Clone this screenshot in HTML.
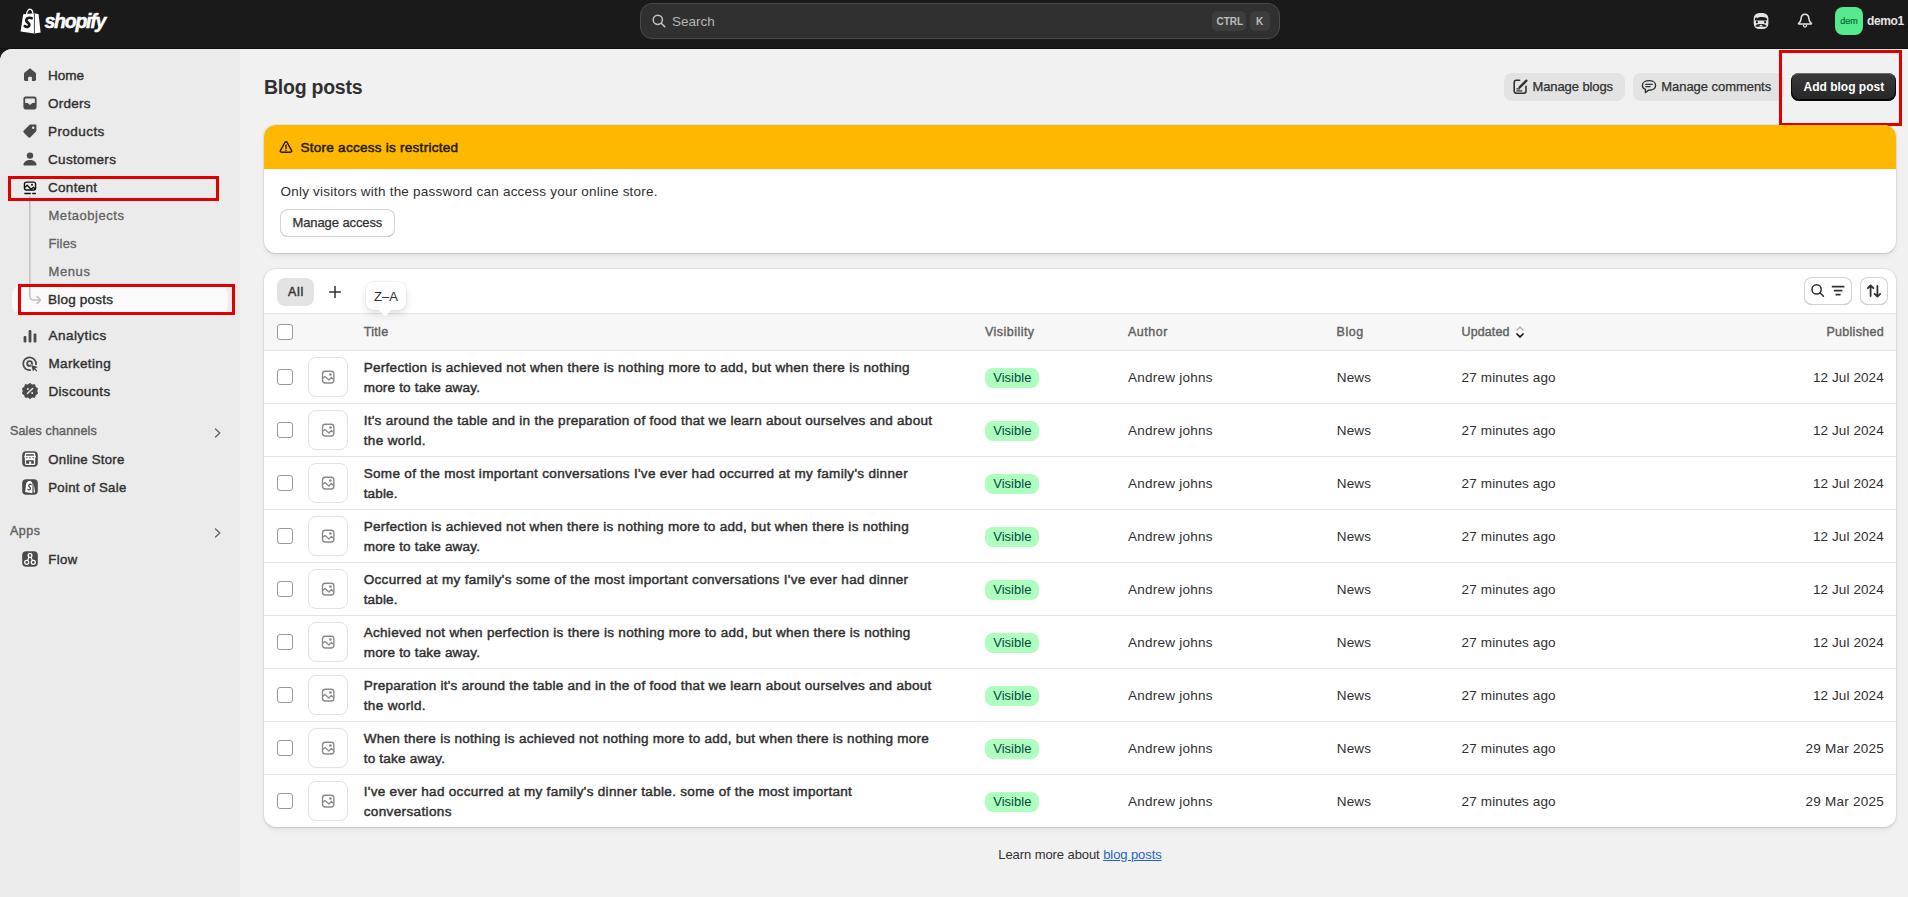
<!DOCTYPE html>
<html><head><meta charset="utf-8"><title>Blog posts</title>
<style>
html,body{margin:0;padding:0;}
body{width:1908px;height:897px;position:relative;overflow:hidden;background:#f1f1f1;font-family:"Liberation Sans", sans-serif;-webkit-font-smoothing:antialiased;}
</style></head><body>
<div style="position:absolute;left:0px;top:0px;width:1908px;height:49px;background:#1a1a1a;border-bottom:1px solid #0e1111;box-sizing:border-box;"></div>
<svg style="position:absolute;left:20px;top:8px;" width="22" height="26" viewBox="0 0 22 26">
<path d="M3.2 6.2 L14.8 5.2 L18.6 6.2 L20.6 24.4 L14.4 25.6 L0.6 23.4 Z" fill="#fff"/>
<path d="M14.4 5.4 L14.4 25.4" stroke="#1a1a1a" stroke-width="0.8"/>
<path d="M6.6 6.4 C6.8 2.2 9.2 0.8 10.8 1.4 C12.4 2 12.8 3.6 12.8 5.6" fill="none" stroke="#fff" stroke-width="1.3"/>
<path d="M11.6 10.2 C10.6 9.6 7.4 9.2 6.4 11.6 C5.4 14.4 9.6 14.6 9.4 17 C9.2 19.2 6.6 19.4 4.8 18.2" fill="none" stroke="#1a1a1a" stroke-width="2.7" stroke-linecap="round"/>
</svg>
<div style="position:absolute;left:44.5px;top:12.09px;font-size:19.5px;line-height:19.5px;font-weight:700;color:#ffffff;white-space:nowrap;letter-spacing:-1.25px;font-style:italic;-webkit-text-stroke:0.5px #fff;">shopify</div>
<div style="position:absolute;left:640px;top:3px;width:638px;height:34px;background:#303030;border:1px solid #4a4a4a;border-radius:12px;"></div>
<svg style="position:absolute;left:652px;top:14px;" width="14" height="14" viewBox="0 0 14 14"><circle cx="5.8" cy="5.8" r="4.6" fill="none" stroke="#c4c4c4" stroke-width="1.5"/><path d="M9.2 9.2 L12.8 12.8" stroke="#c4c4c4" stroke-width="1.6" stroke-linecap="round"/></svg>
<div style="position:absolute;left:672px;top:14.57px;font-size:13.5px;line-height:13.5px;font-weight:400;color:#b5b5b5;white-space:nowrap;">Search</div>
<div style="position:absolute;left:1212px;top:11px;width:34px;height:20px;background:#3d3d3d;border-radius:5px;"></div>
<div style="position:absolute;left:1216.5px;top:16.54px;font-size:10px;line-height:10px;font-weight:700;color:#bdbdbd;white-space:nowrap;">CTRL</div>
<div style="position:absolute;left:1250px;top:11px;width:20px;height:20px;background:#3d3d3d;border-radius:5px;"></div>
<div style="position:absolute;left:1256px;top:16.54px;font-size:10px;line-height:10px;font-weight:700;color:#bdbdbd;white-space:nowrap;">K</div>
<svg style="position:absolute;left:1752px;top:12px;" width="18" height="18" viewBox="0 0 18 18">
<rect x="1.7" y="0.9" width="14.7" height="16.2" rx="5.6" fill="#e3e3e3"/>
<path d="M2.8 8.2 C2.8 6.4 3.6 5.2 4.6 5.2 L5 6.6 C6 5.4 7.8 5 10 5 C13 5 15 5.8 15.2 7.6 L15.2 8.2 C13.4 8.4 11.8 8.8 10.4 8.6 C8.6 8.2 5.6 8.8 2.8 8.2 Z" fill="#1a1a1a"/>
<circle cx="4.9" cy="10.2" r="1.1" fill="#1a1a1a"/><circle cx="13.1" cy="10.2" r="1.1" fill="#1a1a1a"/>
<path d="M3.2 14.2 C4.6 12.6 6.4 11.8 9 12.2 C11.6 11.8 13.4 12.6 14.8 14.2 C13.6 14.8 12 14.8 10.6 14.4 L7.4 14.4 C6 14.8 4.4 14.8 3.2 14.2 Z" fill="#1a1a1a"/>
<ellipse cx="9" cy="13.5" rx="1.6" ry="0.7" fill="#e3e3e3"/>
</svg>
<svg style="position:absolute;left:1796px;top:13px;" width="18" height="18" viewBox="0 0 18 18">
<path d="M9 1.2 C6.4 1.2 5.3 3.2 5.1 5.6 C4.9 8 4.4 8.9 2.8 10 C2.2 10.4 2.4 11 3 11 L15 11 C15.6 11 15.8 10.4 15.2 10 C13.6 8.9 13.1 8 12.9 5.6 C12.7 3.2 11.6 1.2 9 1.2 Z" fill="none" stroke="#e3e3e3" stroke-width="1.5" stroke-linejoin="round"/>
<path d="M7.5 11.6 L7.5 12.6 A1.5 1.5 0 0 0 10.5 12.6 L10.5 11.6" fill="none" stroke="#e3e3e3" stroke-width="1.3"/>
</svg>
<div style="position:absolute;left:1835px;top:7px;width:28px;height:28px;background:#56ea8f;border-radius:8px;"></div>
<div style="position:absolute;left:1840.2px;top:16.98px;font-size:9px;line-height:9px;font-weight:400;color:#086a36;white-space:nowrap;-webkit-text-stroke:0.2px #086a36;">dem</div>
<div style="position:absolute;left:1867px;top:15.44px;font-size:12px;line-height:12px;font-weight:700;color:#e3e3e3;white-space:nowrap;letter-spacing:-0.35px;">demo1</div>
<div style="position:absolute;left:0px;top:49px;width:40px;height:40px;background:#1a1a1a;"></div>
<div style="position:absolute;left:0px;top:49px;width:1908px;height:848px;background:#f1f1f1;border-top-left-radius:12px;overflow:hidden;"></div>
<div style="position:absolute;left:0px;top:49px;width:240px;height:848px;background:#ebebeb;border-top-left-radius:12px;"></div>
<svg style="position:absolute;left:23px;top:67.8px;" width="14" height="14" viewBox="0 0 14 14"><path d="M7 0.3 L12.3 4.5 C12.8 4.9 13 5.3 13 5.9 L13 11.6 C13 12.4 12.4 13 11.6 13 L8.9 13 L8.9 10 C8.9 9.2 8.3 8.7 7.6 8.7 L6.4 8.7 C5.7 8.7 5.1 9.2 5.1 10 L5.1 13 L2.4 13 C1.6 13 1 12.4 1 11.6 L1 5.9 C1 5.3 1.2 4.9 1.7 4.5 Z" fill="#4a4a4a"/></svg>
<div style="position:absolute;left:48px;top:69.26px;font-size:13.52px;line-height:13.52px;font-weight:400;color:#303030;white-space:nowrap;letter-spacing:0.018px;-webkit-text-stroke:0.4px #303030;">Home</div>
<svg style="position:absolute;left:23px;top:96px;" width="14" height="14" viewBox="0 0 14 14"><path d="M2.6 0.6 L11.4 0.6 C12.6 0.6 13.6 1.6 13.6 2.8 L13.6 11.2 C13.6 12.4 12.6 13.4 11.4 13.4 L2.6 13.4 C1.4 13.4 0.4 12.4 0.4 11.2 L0.4 2.8 C0.4 1.6 1.4 0.6 2.6 0.6 Z M2.2 7 L4.8 7 L7 9 L9.2 7 L11.8 7 L11.8 3 C11.8 2.6 11.5 2.4 11.2 2.4 L2.8 2.4 C2.5 2.4 2.2 2.6 2.2 3 Z" fill="#4a4a4a" fill-rule="evenodd"/></svg>
<div style="position:absolute;left:48px;top:97.06px;font-size:13.52px;line-height:13.52px;font-weight:400;color:#303030;white-space:nowrap;letter-spacing:0.262px;-webkit-text-stroke:0.4px #303030;">Orders</div>
<svg style="position:absolute;left:23px;top:124px;" width="14" height="14" viewBox="0 0 14 14"><path d="M7.4 0.6 L12.4 0.6 C13 0.6 13.4 1 13.4 1.6 L13.4 6.6 C13.4 7 13.2 7.3 13 7.6 L7.4 13.2 C6.8 13.8 5.9 13.8 5.3 13.2 L0.8 8.7 C0.2 8.1 0.2 7.2 0.8 6.6 L6.4 1 C6.7 0.8 7 0.6 7.4 0.6 Z" fill="#4a4a4a"/><circle cx="10.2" cy="3.8" r="1.2" fill="#ebebeb"/></svg>
<div style="position:absolute;left:48px;top:124.86px;font-size:13.52px;line-height:13.52px;font-weight:400;color:#303030;white-space:nowrap;letter-spacing:0.427px;-webkit-text-stroke:0.4px #303030;">Products</div>
<svg style="position:absolute;left:23px;top:152.2px;" width="14" height="14" viewBox="0 0 14 14"><circle cx="7" cy="3.6" r="3.2" fill="#4a4a4a"/><path d="M1 13.4 C0.6 13.4 0.4 13 0.4 12.6 C0.8 9.8 3.6 8 7 8 C10.4 8 13.2 9.8 13.6 12.6 C13.6 13 13.4 13.4 13 13.4 Z" fill="#4a4a4a"/></svg>
<div style="position:absolute;left:48px;top:152.56px;font-size:13.52px;line-height:13.52px;font-weight:400;color:#303030;white-space:nowrap;letter-spacing:0.318px;-webkit-text-stroke:0.4px #303030;">Customers</div>
<svg style="position:absolute;left:23px;top:180.7px;" width="14" height="14" viewBox="0 0 14 14"><rect x="1.45" y="1.05" width="11.1" height="7.9" rx="2" fill="none" stroke="#111" stroke-width="1.35"/><path d="M1.6 6.6 L4.3 4.3 L8 8.3 L10.4 6.3 L12.4 8.1" fill="none" stroke="#111" stroke-width="1.3" stroke-linejoin="round"/><circle cx="9" cy="3.7" r="1" fill="#111"/><path d="M1.9 12.4 L7.2 12.4 M9.8 12.4 L12.3 12.4" stroke="#111" stroke-width="1.5" stroke-linecap="round"/></svg>
<div style="position:absolute;left:48px;top:180.56px;font-size:13.52px;line-height:13.52px;font-weight:400;color:#303030;white-space:nowrap;letter-spacing:0.291px;-webkit-text-stroke:0.4px #303030;">Content</div>
<div style="position:absolute;left:48.5px;top:208.80px;font-size:13px;line-height:13px;font-weight:400;color:#616161;white-space:nowrap;letter-spacing:0.541px;-webkit-text-stroke:0.3px #616161;">Metaobjects</div>
<div style="position:absolute;left:48.5px;top:236.80px;font-size:13px;line-height:13px;font-weight:400;color:#616161;white-space:nowrap;letter-spacing:0.138px;-webkit-text-stroke:0.3px #616161;">Files</div>
<div style="position:absolute;left:48.5px;top:264.80px;font-size:13px;line-height:13px;font-weight:400;color:#616161;white-space:nowrap;letter-spacing:0.595px;-webkit-text-stroke:0.3px #616161;">Menus</div>
<div style="position:absolute;left:12px;top:286px;width:216px;height:28px;background:#fafafa;border-radius:8px;"></div>
<svg style="position:absolute;left:28px;top:196px;" width="16" height="110" viewBox="0 0 16 110"><path d="M1.8 0 L1.8 100 C1.8 102.6 3.2 104 5.8 104 L12.2 104" fill="none" stroke="#c0c0c0" stroke-width="1.5"/><path d="M9.2 100.6 L12.6 104 L9.2 107.4" fill="none" stroke="#c0c0c0" stroke-width="1.5" stroke-linecap="round" stroke-linejoin="round"/></svg>
<div style="position:absolute;left:48px;top:292.86px;font-size:13.52px;line-height:13.52px;font-weight:400;color:#303030;white-space:nowrap;letter-spacing:0.208px;-webkit-text-stroke:0.4px #303030;">Blog posts</div>
<svg style="position:absolute;left:23px;top:328.6px;" width="14" height="14" viewBox="0 0 14 14"><rect x="0.6" y="7" width="2.8" height="6.4" rx="1" fill="#4a4a4a"/><rect x="5.6" y="1" width="2.8" height="12.4" rx="1" fill="#4a4a4a"/><rect x="10.6" y="4.4" width="2.8" height="9" rx="1" fill="#4a4a4a"/></svg>
<div style="position:absolute;left:48.5px;top:329.06px;font-size:13.52px;line-height:13.52px;font-weight:400;color:#303030;white-space:nowrap;letter-spacing:0.45px;-webkit-text-stroke:0.4px #303030;">Analytics</div>
<svg style="position:absolute;left:22.4px;top:355.6px;" width="16" height="16" viewBox="0 0 16 16"><path d="M14 8.3 A6.4 6.4 0 1 0 8.2 14.1" fill="none" stroke="#4a4a4a" stroke-width="1.7" stroke-linecap="round"/><circle cx="7.6" cy="7.5" r="2.4" fill="none" stroke="#4a4a4a" stroke-width="1.9"/><path d="M9.2 8.9 L15.8 11 L13.2 12.6 L15.4 14.8 L14.6 15.6 L12.4 13.4 L11 15.6 Z" fill="#4a4a4a" stroke="#ebebeb" stroke-width="1.1" stroke-linejoin="round" paint-order="stroke"/></svg>
<div style="position:absolute;left:48.5px;top:357.06px;font-size:13.52px;line-height:13.52px;font-weight:400;color:#303030;white-space:nowrap;letter-spacing:0.355px;-webkit-text-stroke:0.4px #303030;">Marketing</div>
<svg style="position:absolute;left:22px;top:383.2px;" width="16" height="16" viewBox="0 0 16 16"><path d="M8 0.3 L10.1 1.9 L12.7 1.6 L13.4 4.1 L15.7 5.5 L14.8 8 L15.7 10.5 L13.4 11.9 L12.7 14.4 L10.1 14.1 L8 15.7 L5.9 14.1 L3.3 14.4 L2.6 11.9 L0.3 10.5 L1.2 8 L0.3 5.5 L2.6 4.1 L3.3 1.6 L5.9 1.9 Z" fill="#4a4a4a" stroke="#4a4a4a" stroke-width="0.8" stroke-linejoin="round"/><path d="M5.4 10.6 L10.6 5.4" stroke="#ebebeb" stroke-width="1.4" stroke-linecap="round"/><circle cx="5.8" cy="6" r="1" fill="#ebebeb"/><circle cx="10.2" cy="10" r="1" fill="#ebebeb"/></svg>
<div style="position:absolute;left:48.5px;top:385.26px;font-size:13.52px;line-height:13.52px;font-weight:400;color:#303030;white-space:nowrap;letter-spacing:0.292px;-webkit-text-stroke:0.4px #303030;">Discounts</div>
<div style="position:absolute;left:10px;top:424.84px;font-size:12.48px;line-height:12.48px;font-weight:400;color:#616161;white-space:nowrap;letter-spacing:0.159px;-webkit-text-stroke:0.4px #616161;">Sales channels</div>
<svg style="position:absolute;left:214px;top:428px;" width="8" height="10" viewBox="0 0 8 10"><path d="M1.5 1 L5.8 5 L1.5 9" fill="none" stroke="#616161" stroke-width="1.3" stroke-linecap="round" stroke-linejoin="round"/></svg>
<svg style="position:absolute;left:22px;top:451px;" width="16" height="16" viewBox="0 0 16 16"><rect x="0.2" y="0.2" width="15.6" height="15.6" rx="4" fill="#4a4a4a"/><rect x="2.9" y="1.8" width="10.3" height="12.3" rx="1.3" fill="#fff"/><rect x="2.2" y="4.4" width="11.6" height="2.3" rx="1" fill="#fff"/><rect x="4" y="3.2" width="7.9" height="1.5" fill="#4a4a4a"/><path d="M3.7 6.3 L5.8 6.3 L4.75 7.8 Z M6.95 6.3 L9.05 6.3 L8 7.8 Z M10.2 6.3 L12.3 6.3 L11.25 7.8 Z" fill="#4a4a4a"/><rect x="4.2" y="9.2" width="7.6" height="3.6" fill="#4a4a4a"/><rect x="7.1" y="10.5" width="2.1" height="2.4" fill="#fff"/></svg>
<div style="position:absolute;left:48.3px;top:453.13px;font-size:13.2px;line-height:13.2px;font-weight:400;color:#303030;white-space:nowrap;letter-spacing:0.248px;-webkit-text-stroke:0.4px #303030;">Online Store</div>
<svg style="position:absolute;left:22px;top:479px;" width="16" height="16" viewBox="0 0 16 16"><rect x="0.2" y="0.2" width="15.6" height="15.6" rx="4" fill="#4a4a4a"/><path d="M3.1 13.1 L4.2 4.6 C4.5 2.9 5.9 1.9 7.6 2 C9.3 2.1 10.4 3.2 10.5 5 L10.4 14.3 Z" fill="#fff"/><path d="M11.6 4 L13.1 13.2 L11.6 13.4 Z" fill="#fff"/><path d="M9.1 5.6 C8.3 5 6.9 5.3 6.7 6.6 C6.5 8 8.6 8.1 8.4 9.7 C8.2 11 6.7 11.1 5.9 10.5" fill="none" stroke="#4a4a4a" stroke-width="1.35" stroke-linecap="round"/></svg>
<div style="position:absolute;left:48.3px;top:481.33px;font-size:13.2px;line-height:13.2px;font-weight:400;color:#303030;white-space:nowrap;letter-spacing:0.263px;-webkit-text-stroke:0.4px #303030;">Point of Sale</div>
<div style="position:absolute;left:10px;top:524.84px;font-size:12.48px;line-height:12.48px;font-weight:400;color:#616161;white-space:nowrap;letter-spacing:0.518px;-webkit-text-stroke:0.4px #616161;">Apps</div>
<svg style="position:absolute;left:214px;top:528px;" width="8" height="10" viewBox="0 0 8 10"><path d="M1.5 1 L5.8 5 L1.5 9" fill="none" stroke="#616161" stroke-width="1.3" stroke-linecap="round" stroke-linejoin="round"/></svg>
<svg style="position:absolute;left:22px;top:551px;" width="16" height="16" viewBox="0 0 16 16"><rect x="0.2" y="0.2" width="15.6" height="15.6" rx="4" fill="#4a4a4a"/><circle cx="8" cy="4.4" r="1.9" fill="none" stroke="#fff" stroke-width="1.3"/><circle cx="4.7" cy="11.3" r="2" fill="none" stroke="#fff" stroke-width="1.3"/><circle cx="11.3" cy="11.3" r="2" fill="none" stroke="#fff" stroke-width="1.3"/><path d="M7.1 6.2 L5.5 9.5 M8.9 6.2 L10.5 9.5" stroke="#fff" stroke-width="1.2"/></svg>
<div style="position:absolute;left:48.3px;top:553.13px;font-size:13.2px;line-height:13.2px;font-weight:400;color:#303030;white-space:nowrap;letter-spacing:0.377px;-webkit-text-stroke:0.4px #303030;">Flow</div>
<div style="position:absolute;left:8px;top:176px;width:211px;height:25px;border:3px solid #e00000;box-sizing:border-box;"></div>
<div style="position:absolute;left:18px;top:284px;width:217px;height:31px;border:3px solid #e00000;box-sizing:border-box;"></div>
<div style="position:absolute;left:264px;top:78.19px;font-size:19.5px;line-height:19.5px;font-weight:700;color:#303030;white-space:nowrap;letter-spacing:-0.25px;">Blog posts</div>
<div style="position:absolute;left:1504px;top:73px;width:121px;height:28px;background:#e3e3e3;border-radius:8px;"></div>
<svg style="position:absolute;left:1513px;top:78px;" width="16" height="16" viewBox="0 0 16 16"><path d="M6.6 2.2 L3.4 2.2 C2 2.2 1.2 3 1.2 4.4 L1.2 13 C1.2 14.4 2 15.2 3.4 15.2 L10.8 15.2 C12.2 15.2 13 14.4 13 13 L13 8.4" fill="none" stroke="#303030" stroke-width="1.6" stroke-linecap="round"/><path d="M6.6 9.4 L13.4 2.6" stroke="#303030" stroke-width="2.3" stroke-linecap="round"/><path d="M3.9 10.8 L6.4 10.8 M3.9 12.9 L8.8 12.9" stroke="#303030" stroke-width="1.3" stroke-linecap="round"/></svg>
<div style="position:absolute;left:1532.5px;top:80.00px;font-size:13px;line-height:13px;font-weight:400;color:#303030;white-space:nowrap;letter-spacing:-0.1px;-webkit-text-stroke:0.25px #303030;">Manage blogs</div>
<div style="position:absolute;left:1633px;top:73px;width:151px;height:28px;background:#e3e3e3;border-radius:8px;"></div>
<svg style="position:absolute;left:1641px;top:79px;" width="16" height="16" viewBox="0 0 16 16"><path d="M8 1.6 C4.2 1.6 1.4 3.6 1.4 6.4 C1.4 8.2 2.6 9.6 4.4 10.4 L4.4 13.6 L7.4 11.2 C7.6 11.2 7.8 11.2 8 11.2 C11.8 11.2 14.6 9.2 14.6 6.4 C14.6 3.6 11.8 1.6 8 1.6 Z" fill="none" stroke="#303030" stroke-width="1.4" stroke-linejoin="round"/><path d="M4.8 5.4 L11.2 5.4 M4.8 7.6 L9 7.6" stroke="#303030" stroke-width="1.3" stroke-linecap="round"/></svg>
<div style="position:absolute;left:1661.3px;top:80.00px;font-size:13px;line-height:13px;font-weight:400;color:#303030;white-space:nowrap;letter-spacing:-0.05px;-webkit-text-stroke:0.25px #303030;">Manage comments</div>
<div style="position:absolute;left:1791px;top:73px;width:105px;height:28px;background:linear-gradient(#3a3a3a,#262626);border-radius:8px;box-shadow:0 -1px 0 1px rgba(0,0,0,0.8) inset, 0 1px 0 rgba(255,255,255,0.25) inset;"></div>
<div style="position:absolute;left:1803.5px;top:80.84px;font-size:12px;line-height:12px;font-weight:700;color:#ffffff;white-space:nowrap;">Add blog post</div>
<div style="position:absolute;left:1779px;top:50px;width:123px;height:76px;border:3px solid #e00000;box-sizing:border-box;"></div>
<div style="position:absolute;left:264px;top:125px;width:1632px;height:128px;background:#fff;border-radius:12px;box-shadow:0 1px 0 rgba(26,26,26,0.07), 0 0 0 1px rgba(0,0,0,0.06), 0 3px 5px rgba(0,0,0,0.07);overflow:hidden;"></div>
<div style="position:absolute;left:264px;top:125px;width:1632px;height:44px;background:#ffb800;border-radius:12px 12px 0 0;"></div>
<svg style="position:absolute;left:279px;top:140px;" width="14" height="14" viewBox="0 0 14 14"><path d="M5.9 2.5 Q7 0.7 8.1 2.5 L12.5 10.3 Q13.4 12.2 11.3 12.2 L2.7 12.2 Q0.6 12.2 1.5 10.3 Z" fill="none" stroke="#251a00" stroke-width="1.45" stroke-linejoin="round"/><path d="M7 5.2 L7 8.4" stroke="#251a00" stroke-width="1.4" stroke-linecap="round"/><circle cx="7" cy="10.3" r="0.8" fill="#251a00"/></svg>
<div style="position:absolute;left:300.5px;top:140.56px;font-size:13.52px;line-height:13.52px;font-weight:400;color:#251a00;white-space:nowrap;letter-spacing:0.26px;-webkit-text-stroke:0.5px #251a00;">Store access is restricted</div>
<div style="position:absolute;left:280.5px;top:184.87px;font-size:13.5px;line-height:13.5px;font-weight:400;color:#303030;white-space:nowrap;letter-spacing:0.218px;">Only visitors with the password can access your online store.</div>
<div style="position:absolute;left:280px;top:209px;width:115px;height:28px;background:#fff;border-radius:8px;box-shadow:0 0 0 1px #d4d4d4 inset, 0 -1px 0 #b5b5b5 inset;"></div>
<div style="position:absolute;left:292.5px;top:215.80px;font-size:13px;line-height:13px;font-weight:400;color:#303030;white-space:nowrap;letter-spacing:-0.1px;-webkit-text-stroke:0.25px #303030;">Manage access</div>
<div style="position:absolute;left:264px;top:269px;width:1632px;height:558px;background:#fff;border-radius:12px;box-shadow:0 1px 0 rgba(26,26,26,0.07), 0 0 0 1px rgba(0,0,0,0.06), 0 3px 5px rgba(0,0,0,0.07);overflow:hidden;"></div>
<div style="position:absolute;left:277px;top:278px;width:37px;height:28px;background:#e3e3e3;border-radius:8px;"></div>
<div style="position:absolute;left:288px;top:286.44px;font-size:12.48px;line-height:12.48px;font-weight:400;color:#303030;white-space:nowrap;letter-spacing:0.732px;-webkit-text-stroke:0.4px #303030;">All</div>
<svg style="position:absolute;left:328px;top:285px;" width="14" height="14" viewBox="0 0 14 14"><path d="M7 1.6 L7 12.4 M1.6 7 L12.4 7" stroke="#303030" stroke-width="1.5" stroke-linecap="round"/></svg>
<div style="position:absolute;left:1804px;top:277px;width:48px;height:28px;background:#fff;border-radius:8px;box-shadow:0 0 0 1px #d4d4d4 inset, 0 -1px 0 #b5b5b5 inset;"></div>
<svg style="position:absolute;left:1810px;top:283px;" width="36" height="16" viewBox="0 0 36 16"><circle cx="6.6" cy="6.4" r="4.6" fill="none" stroke="#303030" stroke-width="1.5"/><path d="M10 9.8 L13.4 13.2" stroke="#303030" stroke-width="1.6" stroke-linecap="round"/><path d="M21.8 3.6 L34.4 3.6 M23.8 7.6 L32.4 7.6 M25.6 11.6 L30.6 11.6" stroke="#303030" stroke-width="1.9"/></svg>
<div style="position:absolute;left:1860px;top:277px;width:28px;height:28px;background:#fff;border-radius:8px;box-shadow:0 0 0 1px #d4d4d4 inset, 0 -1px 0 #b5b5b5 inset;"></div>
<svg style="position:absolute;left:1866px;top:283px;" width="16" height="16" viewBox="0 0 16 16"><path d="M4.6 13 L4.6 2.4 M1.8 5.2 L4.6 2.4 L7.4 5.2" fill="none" stroke="#303030" stroke-width="1.8" stroke-linecap="round" stroke-linejoin="round"/><path d="M11.4 3 L11.4 13.6 M8.6 10.8 L11.4 13.6 L14.2 10.8" fill="none" stroke="#303030" stroke-width="1.8" stroke-linecap="round" stroke-linejoin="round"/></svg>
<div style="position:absolute;left:264px;top:313px;width:1632px;height:38px;background:#f7f7f7;border-top:1px solid #e3e3e3;border-bottom:1px solid #e3e3e3;box-sizing:border-box;"></div>
<div style="position:absolute;left:277px;top:324px;width:16px;height:16px;background:#fff;border:1px solid #9a9a9a;border-radius:3px;box-sizing:border-box;"></div>
<div style="position:absolute;left:363.7px;top:326.34px;font-size:12.48px;line-height:12.48px;font-weight:400;color:#616161;white-space:nowrap;letter-spacing:0.334px;-webkit-text-stroke:0.4px #616161;">Title</div>
<div style="position:absolute;left:985px;top:326.34px;font-size:12.48px;line-height:12.48px;font-weight:400;color:#616161;white-space:nowrap;letter-spacing:0.476px;-webkit-text-stroke:0.4px #616161;">Visibility</div>
<div style="position:absolute;left:1128px;top:326.34px;font-size:12.48px;line-height:12.48px;font-weight:400;color:#616161;white-space:nowrap;letter-spacing:0.511px;-webkit-text-stroke:0.4px #616161;">Author</div>
<div style="position:absolute;left:1336.5px;top:326.34px;font-size:12.48px;line-height:12.48px;font-weight:400;color:#616161;white-space:nowrap;letter-spacing:0.561px;-webkit-text-stroke:0.4px #616161;">Blog</div>
<div style="position:absolute;left:1461.5px;top:326.34px;font-size:12.48px;line-height:12.48px;font-weight:400;color:#616161;white-space:nowrap;letter-spacing:0.136px;-webkit-text-stroke:0.4px #616161;">Updated</div>
<svg style="position:absolute;left:1515px;top:325px;" width="10" height="14" viewBox="0 0 10 14"><path d="M2 5 L5 2 L8 5" fill="none" stroke="#b0b0b0" stroke-width="1.3" stroke-linecap="round" stroke-linejoin="round"/><path d="M2 9 L5 12 L8 9" fill="none" stroke="#111" stroke-width="1.7" stroke-linecap="round" stroke-linejoin="round"/></svg>
<div style="position:absolute;right:24px;top:326.34px;font-size:12.48px;line-height:12.48px;font-weight:400;color:#616161;white-space:nowrap;letter-spacing:0.316px;-webkit-text-stroke:0.4px #616161;">Published</div>
<div style="position:absolute;left:264px;top:403px;width:1632px;height:1px;background:#e3e3e3;"></div>
<div style="position:absolute;left:277px;top:369px;width:16px;height:16px;background:#fff;border:1px solid #9a9a9a;border-radius:3px;box-sizing:border-box;"></div>
<div style="position:absolute;left:308px;top:357px;width:40px;height:40px;background:#fff;border:1px solid #e3e3e3;border-radius:8px;box-sizing:border-box;"></div>
<svg style="position:absolute;left:321px;top:370px;" width="14" height="14" viewBox="0 0 14 14"><rect x="1.5" y="1.25" width="11.4" height="11.7" rx="2.8" fill="none" stroke="#8a8a8a" stroke-width="1.35"/><path d="M1.4 8.6 L4 6.4 L7.9 10 L10.4 7.4 L12.6 9.6" fill="none" stroke="#8a8a8a" stroke-width="1.3" stroke-linejoin="round"/><circle cx="9.4" cy="4.5" r="1.35" fill="#8a8a8a"/></svg>
<div style="position:absolute;left:363.7px;top:360.86px;font-size:13.52px;line-height:13.52px;font-weight:400;color:#303030;white-space:nowrap;letter-spacing:0.285px;-webkit-text-stroke:0.45px #303030;">Perfection is achieved not when there is nothing more to add, but when there is nothing</div>
<div style="position:absolute;left:363.7px;top:380.86px;font-size:13.52px;line-height:13.52px;font-weight:400;color:#303030;white-space:nowrap;letter-spacing:0.181px;-webkit-text-stroke:0.45px #303030;">more to take away.</div>
<div style="position:absolute;left:985px;top:368px;width:54px;height:20px;background:#affebf;border-radius:8px;"></div>
<div style="position:absolute;left:993.3px;top:371.00px;font-size:13px;line-height:13px;font-weight:400;color:#014b40;white-space:nowrap;">Visible</div>
<div style="position:absolute;left:1128px;top:371.37px;font-size:13.5px;line-height:13.5px;font-weight:400;color:#303030;white-space:nowrap;letter-spacing:0.246px;">Andrew johns</div>
<div style="position:absolute;left:1336.8px;top:371.37px;font-size:13.5px;line-height:13.5px;font-weight:400;color:#303030;white-space:nowrap;letter-spacing:0.148px;">News</div>
<div style="position:absolute;left:1461.6px;top:371.37px;font-size:13.5px;line-height:13.5px;font-weight:400;color:#303030;white-space:nowrap;letter-spacing:0.13px;">27 minutes ago</div>
<div style="position:absolute;right:24.21074453124993px;top:371.37px;font-size:13.5px;line-height:13.5px;font-weight:400;color:#303030;white-space:nowrap;letter-spacing:0.089px;">12 Jul 2024</div>
<div style="position:absolute;left:264px;top:456px;width:1632px;height:1px;background:#e3e3e3;"></div>
<div style="position:absolute;left:277px;top:422px;width:16px;height:16px;background:#fff;border:1px solid #9a9a9a;border-radius:3px;box-sizing:border-box;"></div>
<div style="position:absolute;left:308px;top:410px;width:40px;height:40px;background:#fff;border:1px solid #e3e3e3;border-radius:8px;box-sizing:border-box;"></div>
<svg style="position:absolute;left:321px;top:423px;" width="14" height="14" viewBox="0 0 14 14"><rect x="1.5" y="1.25" width="11.4" height="11.7" rx="2.8" fill="none" stroke="#8a8a8a" stroke-width="1.35"/><path d="M1.4 8.6 L4 6.4 L7.9 10 L10.4 7.4 L12.6 9.6" fill="none" stroke="#8a8a8a" stroke-width="1.3" stroke-linejoin="round"/><circle cx="9.4" cy="4.5" r="1.35" fill="#8a8a8a"/></svg>
<div style="position:absolute;left:363.7px;top:413.86px;font-size:13.52px;line-height:13.52px;font-weight:400;color:#303030;white-space:nowrap;letter-spacing:0.28px;-webkit-text-stroke:0.45px #303030;">It's around the table and in the preparation of food that we learn about ourselves and about</div>
<div style="position:absolute;left:363.7px;top:433.86px;font-size:13.52px;line-height:13.52px;font-weight:400;color:#303030;white-space:nowrap;letter-spacing:0.365px;-webkit-text-stroke:0.45px #303030;">the world.</div>
<div style="position:absolute;left:985px;top:421px;width:54px;height:20px;background:#affebf;border-radius:8px;"></div>
<div style="position:absolute;left:993.3px;top:424.00px;font-size:13px;line-height:13px;font-weight:400;color:#014b40;white-space:nowrap;">Visible</div>
<div style="position:absolute;left:1128px;top:424.37px;font-size:13.5px;line-height:13.5px;font-weight:400;color:#303030;white-space:nowrap;letter-spacing:0.246px;">Andrew johns</div>
<div style="position:absolute;left:1336.8px;top:424.37px;font-size:13.5px;line-height:13.5px;font-weight:400;color:#303030;white-space:nowrap;letter-spacing:0.148px;">News</div>
<div style="position:absolute;left:1461.6px;top:424.37px;font-size:13.5px;line-height:13.5px;font-weight:400;color:#303030;white-space:nowrap;letter-spacing:0.13px;">27 minutes ago</div>
<div style="position:absolute;right:24.21074453124993px;top:424.37px;font-size:13.5px;line-height:13.5px;font-weight:400;color:#303030;white-space:nowrap;letter-spacing:0.089px;">12 Jul 2024</div>
<div style="position:absolute;left:264px;top:509px;width:1632px;height:1px;background:#e3e3e3;"></div>
<div style="position:absolute;left:277px;top:475px;width:16px;height:16px;background:#fff;border:1px solid #9a9a9a;border-radius:3px;box-sizing:border-box;"></div>
<div style="position:absolute;left:308px;top:463px;width:40px;height:40px;background:#fff;border:1px solid #e3e3e3;border-radius:8px;box-sizing:border-box;"></div>
<svg style="position:absolute;left:321px;top:476px;" width="14" height="14" viewBox="0 0 14 14"><rect x="1.5" y="1.25" width="11.4" height="11.7" rx="2.8" fill="none" stroke="#8a8a8a" stroke-width="1.35"/><path d="M1.4 8.6 L4 6.4 L7.9 10 L10.4 7.4 L12.6 9.6" fill="none" stroke="#8a8a8a" stroke-width="1.3" stroke-linejoin="round"/><circle cx="9.4" cy="4.5" r="1.35" fill="#8a8a8a"/></svg>
<div style="position:absolute;left:363.7px;top:466.86px;font-size:13.52px;line-height:13.52px;font-weight:400;color:#303030;white-space:nowrap;letter-spacing:0.324px;-webkit-text-stroke:0.45px #303030;">Some of the most important conversations I've ever had occurred at my family's dinner</div>
<div style="position:absolute;left:363.7px;top:486.86px;font-size:13.52px;line-height:13.52px;font-weight:400;color:#303030;white-space:nowrap;letter-spacing:0.145px;-webkit-text-stroke:0.45px #303030;">table.</div>
<div style="position:absolute;left:985px;top:474px;width:54px;height:20px;background:#affebf;border-radius:8px;"></div>
<div style="position:absolute;left:993.3px;top:477.00px;font-size:13px;line-height:13px;font-weight:400;color:#014b40;white-space:nowrap;">Visible</div>
<div style="position:absolute;left:1128px;top:477.37px;font-size:13.5px;line-height:13.5px;font-weight:400;color:#303030;white-space:nowrap;letter-spacing:0.246px;">Andrew johns</div>
<div style="position:absolute;left:1336.8px;top:477.37px;font-size:13.5px;line-height:13.5px;font-weight:400;color:#303030;white-space:nowrap;letter-spacing:0.148px;">News</div>
<div style="position:absolute;left:1461.6px;top:477.37px;font-size:13.5px;line-height:13.5px;font-weight:400;color:#303030;white-space:nowrap;letter-spacing:0.13px;">27 minutes ago</div>
<div style="position:absolute;right:24.21074453124993px;top:477.37px;font-size:13.5px;line-height:13.5px;font-weight:400;color:#303030;white-space:nowrap;letter-spacing:0.089px;">12 Jul 2024</div>
<div style="position:absolute;left:264px;top:562px;width:1632px;height:1px;background:#e3e3e3;"></div>
<div style="position:absolute;left:277px;top:528px;width:16px;height:16px;background:#fff;border:1px solid #9a9a9a;border-radius:3px;box-sizing:border-box;"></div>
<div style="position:absolute;left:308px;top:516px;width:40px;height:40px;background:#fff;border:1px solid #e3e3e3;border-radius:8px;box-sizing:border-box;"></div>
<svg style="position:absolute;left:321px;top:529px;" width="14" height="14" viewBox="0 0 14 14"><rect x="1.5" y="1.25" width="11.4" height="11.7" rx="2.8" fill="none" stroke="#8a8a8a" stroke-width="1.35"/><path d="M1.4 8.6 L4 6.4 L7.9 10 L10.4 7.4 L12.6 9.6" fill="none" stroke="#8a8a8a" stroke-width="1.3" stroke-linejoin="round"/><circle cx="9.4" cy="4.5" r="1.35" fill="#8a8a8a"/></svg>
<div style="position:absolute;left:363.7px;top:519.86px;font-size:13.52px;line-height:13.52px;font-weight:400;color:#303030;white-space:nowrap;letter-spacing:0.274px;-webkit-text-stroke:0.45px #303030;">Perfection is achieved not when there is nothing more to add, but when there is nothing</div>
<div style="position:absolute;left:363.7px;top:539.86px;font-size:13.52px;line-height:13.52px;font-weight:400;color:#303030;white-space:nowrap;letter-spacing:0.181px;-webkit-text-stroke:0.45px #303030;">more to take away.</div>
<div style="position:absolute;left:985px;top:527px;width:54px;height:20px;background:#affebf;border-radius:8px;"></div>
<div style="position:absolute;left:993.3px;top:530.00px;font-size:13px;line-height:13px;font-weight:400;color:#014b40;white-space:nowrap;">Visible</div>
<div style="position:absolute;left:1128px;top:530.37px;font-size:13.5px;line-height:13.5px;font-weight:400;color:#303030;white-space:nowrap;letter-spacing:0.246px;">Andrew johns</div>
<div style="position:absolute;left:1336.8px;top:530.37px;font-size:13.5px;line-height:13.5px;font-weight:400;color:#303030;white-space:nowrap;letter-spacing:0.148px;">News</div>
<div style="position:absolute;left:1461.6px;top:530.37px;font-size:13.5px;line-height:13.5px;font-weight:400;color:#303030;white-space:nowrap;letter-spacing:0.13px;">27 minutes ago</div>
<div style="position:absolute;right:24.21074453124993px;top:530.37px;font-size:13.5px;line-height:13.5px;font-weight:400;color:#303030;white-space:nowrap;letter-spacing:0.089px;">12 Jul 2024</div>
<div style="position:absolute;left:264px;top:615px;width:1632px;height:1px;background:#e3e3e3;"></div>
<div style="position:absolute;left:277px;top:581px;width:16px;height:16px;background:#fff;border:1px solid #9a9a9a;border-radius:3px;box-sizing:border-box;"></div>
<div style="position:absolute;left:308px;top:569px;width:40px;height:40px;background:#fff;border:1px solid #e3e3e3;border-radius:8px;box-sizing:border-box;"></div>
<svg style="position:absolute;left:321px;top:582px;" width="14" height="14" viewBox="0 0 14 14"><rect x="1.5" y="1.25" width="11.4" height="11.7" rx="2.8" fill="none" stroke="#8a8a8a" stroke-width="1.35"/><path d="M1.4 8.6 L4 6.4 L7.9 10 L10.4 7.4 L12.6 9.6" fill="none" stroke="#8a8a8a" stroke-width="1.3" stroke-linejoin="round"/><circle cx="9.4" cy="4.5" r="1.35" fill="#8a8a8a"/></svg>
<div style="position:absolute;left:363.7px;top:572.86px;font-size:13.52px;line-height:13.52px;font-weight:400;color:#303030;white-space:nowrap;letter-spacing:0.321px;-webkit-text-stroke:0.45px #303030;">Occurred at my family's some of the most important conversations I've ever had dinner</div>
<div style="position:absolute;left:363.7px;top:592.86px;font-size:13.52px;line-height:13.52px;font-weight:400;color:#303030;white-space:nowrap;letter-spacing:0.145px;-webkit-text-stroke:0.45px #303030;">table.</div>
<div style="position:absolute;left:985px;top:580px;width:54px;height:20px;background:#affebf;border-radius:8px;"></div>
<div style="position:absolute;left:993.3px;top:583.00px;font-size:13px;line-height:13px;font-weight:400;color:#014b40;white-space:nowrap;">Visible</div>
<div style="position:absolute;left:1128px;top:583.37px;font-size:13.5px;line-height:13.5px;font-weight:400;color:#303030;white-space:nowrap;letter-spacing:0.246px;">Andrew johns</div>
<div style="position:absolute;left:1336.8px;top:583.37px;font-size:13.5px;line-height:13.5px;font-weight:400;color:#303030;white-space:nowrap;letter-spacing:0.148px;">News</div>
<div style="position:absolute;left:1461.6px;top:583.37px;font-size:13.5px;line-height:13.5px;font-weight:400;color:#303030;white-space:nowrap;letter-spacing:0.13px;">27 minutes ago</div>
<div style="position:absolute;right:24.21074453124993px;top:583.37px;font-size:13.5px;line-height:13.5px;font-weight:400;color:#303030;white-space:nowrap;letter-spacing:0.089px;">12 Jul 2024</div>
<div style="position:absolute;left:264px;top:668px;width:1632px;height:1px;background:#e3e3e3;"></div>
<div style="position:absolute;left:277px;top:634px;width:16px;height:16px;background:#fff;border:1px solid #9a9a9a;border-radius:3px;box-sizing:border-box;"></div>
<div style="position:absolute;left:308px;top:622px;width:40px;height:40px;background:#fff;border:1px solid #e3e3e3;border-radius:8px;box-sizing:border-box;"></div>
<svg style="position:absolute;left:321px;top:635px;" width="14" height="14" viewBox="0 0 14 14"><rect x="1.5" y="1.25" width="11.4" height="11.7" rx="2.8" fill="none" stroke="#8a8a8a" stroke-width="1.35"/><path d="M1.4 8.6 L4 6.4 L7.9 10 L10.4 7.4 L12.6 9.6" fill="none" stroke="#8a8a8a" stroke-width="1.3" stroke-linejoin="round"/><circle cx="9.4" cy="4.5" r="1.35" fill="#8a8a8a"/></svg>
<div style="position:absolute;left:363.7px;top:625.86px;font-size:13.52px;line-height:13.52px;font-weight:400;color:#303030;white-space:nowrap;letter-spacing:0.293px;-webkit-text-stroke:0.45px #303030;">Achieved not when perfection is there is nothing more to add, but when there is nothing</div>
<div style="position:absolute;left:363.7px;top:645.86px;font-size:13.52px;line-height:13.52px;font-weight:400;color:#303030;white-space:nowrap;letter-spacing:0.181px;-webkit-text-stroke:0.45px #303030;">more to take away.</div>
<div style="position:absolute;left:985px;top:633px;width:54px;height:20px;background:#affebf;border-radius:8px;"></div>
<div style="position:absolute;left:993.3px;top:636.00px;font-size:13px;line-height:13px;font-weight:400;color:#014b40;white-space:nowrap;">Visible</div>
<div style="position:absolute;left:1128px;top:636.37px;font-size:13.5px;line-height:13.5px;font-weight:400;color:#303030;white-space:nowrap;letter-spacing:0.246px;">Andrew johns</div>
<div style="position:absolute;left:1336.8px;top:636.37px;font-size:13.5px;line-height:13.5px;font-weight:400;color:#303030;white-space:nowrap;letter-spacing:0.148px;">News</div>
<div style="position:absolute;left:1461.6px;top:636.37px;font-size:13.5px;line-height:13.5px;font-weight:400;color:#303030;white-space:nowrap;letter-spacing:0.13px;">27 minutes ago</div>
<div style="position:absolute;right:24.21074453124993px;top:636.37px;font-size:13.5px;line-height:13.5px;font-weight:400;color:#303030;white-space:nowrap;letter-spacing:0.089px;">12 Jul 2024</div>
<div style="position:absolute;left:264px;top:721px;width:1632px;height:1px;background:#e3e3e3;"></div>
<div style="position:absolute;left:277px;top:687px;width:16px;height:16px;background:#fff;border:1px solid #9a9a9a;border-radius:3px;box-sizing:border-box;"></div>
<div style="position:absolute;left:308px;top:675px;width:40px;height:40px;background:#fff;border:1px solid #e3e3e3;border-radius:8px;box-sizing:border-box;"></div>
<svg style="position:absolute;left:321px;top:688px;" width="14" height="14" viewBox="0 0 14 14"><rect x="1.5" y="1.25" width="11.4" height="11.7" rx="2.8" fill="none" stroke="#8a8a8a" stroke-width="1.35"/><path d="M1.4 8.6 L4 6.4 L7.9 10 L10.4 7.4 L12.6 9.6" fill="none" stroke="#8a8a8a" stroke-width="1.3" stroke-linejoin="round"/><circle cx="9.4" cy="4.5" r="1.35" fill="#8a8a8a"/></svg>
<div style="position:absolute;left:363.7px;top:678.86px;font-size:13.52px;line-height:13.52px;font-weight:400;color:#303030;white-space:nowrap;letter-spacing:0.264px;-webkit-text-stroke:0.45px #303030;">Preparation it's around the table and in the of food that we learn about ourselves and about</div>
<div style="position:absolute;left:363.7px;top:698.86px;font-size:13.52px;line-height:13.52px;font-weight:400;color:#303030;white-space:nowrap;letter-spacing:0.365px;-webkit-text-stroke:0.45px #303030;">the world.</div>
<div style="position:absolute;left:985px;top:686px;width:54px;height:20px;background:#affebf;border-radius:8px;"></div>
<div style="position:absolute;left:993.3px;top:689.00px;font-size:13px;line-height:13px;font-weight:400;color:#014b40;white-space:nowrap;">Visible</div>
<div style="position:absolute;left:1128px;top:689.37px;font-size:13.5px;line-height:13.5px;font-weight:400;color:#303030;white-space:nowrap;letter-spacing:0.246px;">Andrew johns</div>
<div style="position:absolute;left:1336.8px;top:689.37px;font-size:13.5px;line-height:13.5px;font-weight:400;color:#303030;white-space:nowrap;letter-spacing:0.148px;">News</div>
<div style="position:absolute;left:1461.6px;top:689.37px;font-size:13.5px;line-height:13.5px;font-weight:400;color:#303030;white-space:nowrap;letter-spacing:0.13px;">27 minutes ago</div>
<div style="position:absolute;right:24.21074453124993px;top:689.37px;font-size:13.5px;line-height:13.5px;font-weight:400;color:#303030;white-space:nowrap;letter-spacing:0.089px;">12 Jul 2024</div>
<div style="position:absolute;left:264px;top:774px;width:1632px;height:1px;background:#e3e3e3;"></div>
<div style="position:absolute;left:277px;top:740px;width:16px;height:16px;background:#fff;border:1px solid #9a9a9a;border-radius:3px;box-sizing:border-box;"></div>
<div style="position:absolute;left:308px;top:728px;width:40px;height:40px;background:#fff;border:1px solid #e3e3e3;border-radius:8px;box-sizing:border-box;"></div>
<svg style="position:absolute;left:321px;top:741px;" width="14" height="14" viewBox="0 0 14 14"><rect x="1.5" y="1.25" width="11.4" height="11.7" rx="2.8" fill="none" stroke="#8a8a8a" stroke-width="1.35"/><path d="M1.4 8.6 L4 6.4 L7.9 10 L10.4 7.4 L12.6 9.6" fill="none" stroke="#8a8a8a" stroke-width="1.3" stroke-linejoin="round"/><circle cx="9.4" cy="4.5" r="1.35" fill="#8a8a8a"/></svg>
<div style="position:absolute;left:363.7px;top:731.86px;font-size:13.52px;line-height:13.52px;font-weight:400;color:#303030;white-space:nowrap;letter-spacing:0.258px;-webkit-text-stroke:0.45px #303030;">When there is nothing is achieved not nothing more to add, but when there is nothing more</div>
<div style="position:absolute;left:363.7px;top:751.86px;font-size:13.52px;line-height:13.52px;font-weight:400;color:#303030;white-space:nowrap;letter-spacing:0.22px;-webkit-text-stroke:0.45px #303030;">to take away.</div>
<div style="position:absolute;left:985px;top:739px;width:54px;height:20px;background:#affebf;border-radius:8px;"></div>
<div style="position:absolute;left:993.3px;top:742.00px;font-size:13px;line-height:13px;font-weight:400;color:#014b40;white-space:nowrap;">Visible</div>
<div style="position:absolute;left:1128px;top:742.37px;font-size:13.5px;line-height:13.5px;font-weight:400;color:#303030;white-space:nowrap;letter-spacing:0.246px;">Andrew johns</div>
<div style="position:absolute;left:1336.8px;top:742.37px;font-size:13.5px;line-height:13.5px;font-weight:400;color:#303030;white-space:nowrap;letter-spacing:0.148px;">News</div>
<div style="position:absolute;left:1461.6px;top:742.37px;font-size:13.5px;line-height:13.5px;font-weight:400;color:#303030;white-space:nowrap;letter-spacing:0.13px;">27 minutes ago</div>
<div style="position:absolute;right:24.04995468749985px;top:742.37px;font-size:13.5px;line-height:13.5px;font-weight:400;color:#303030;white-space:nowrap;letter-spacing:0.25px;">29 Mar 2025</div>
<div style="position:absolute;left:277px;top:793px;width:16px;height:16px;background:#fff;border:1px solid #9a9a9a;border-radius:3px;box-sizing:border-box;"></div>
<div style="position:absolute;left:308px;top:781px;width:40px;height:40px;background:#fff;border:1px solid #e3e3e3;border-radius:8px;box-sizing:border-box;"></div>
<svg style="position:absolute;left:321px;top:794px;" width="14" height="14" viewBox="0 0 14 14"><rect x="1.5" y="1.25" width="11.4" height="11.7" rx="2.8" fill="none" stroke="#8a8a8a" stroke-width="1.35"/><path d="M1.4 8.6 L4 6.4 L7.9 10 L10.4 7.4 L12.6 9.6" fill="none" stroke="#8a8a8a" stroke-width="1.3" stroke-linejoin="round"/><circle cx="9.4" cy="4.5" r="1.35" fill="#8a8a8a"/></svg>
<div style="position:absolute;left:363.7px;top:784.86px;font-size:13.52px;line-height:13.52px;font-weight:400;color:#303030;white-space:nowrap;letter-spacing:0.312px;-webkit-text-stroke:0.45px #303030;">I've ever had occurred at my family's dinner table. some of the most important</div>
<div style="position:absolute;left:363.7px;top:804.86px;font-size:13.52px;line-height:13.52px;font-weight:400;color:#303030;white-space:nowrap;letter-spacing:0.365px;-webkit-text-stroke:0.45px #303030;">conversations</div>
<div style="position:absolute;left:985px;top:792px;width:54px;height:20px;background:#affebf;border-radius:8px;"></div>
<div style="position:absolute;left:993.3px;top:795.00px;font-size:13px;line-height:13px;font-weight:400;color:#014b40;white-space:nowrap;">Visible</div>
<div style="position:absolute;left:1128px;top:795.37px;font-size:13.5px;line-height:13.5px;font-weight:400;color:#303030;white-space:nowrap;letter-spacing:0.246px;">Andrew johns</div>
<div style="position:absolute;left:1336.8px;top:795.37px;font-size:13.5px;line-height:13.5px;font-weight:400;color:#303030;white-space:nowrap;letter-spacing:0.148px;">News</div>
<div style="position:absolute;left:1461.6px;top:795.37px;font-size:13.5px;line-height:13.5px;font-weight:400;color:#303030;white-space:nowrap;letter-spacing:0.13px;">27 minutes ago</div>
<div style="position:absolute;right:24.04995468749985px;top:795.37px;font-size:13.5px;line-height:13.5px;font-weight:400;color:#303030;white-space:nowrap;letter-spacing:0.25px;">29 Mar 2025</div>
<div style="position:absolute;left:366px;top:282px;width:40px;height:28px;background:#fff;border-radius:8px;box-shadow:0 4px 8px rgba(0,0,0,0.12),0 0 0 1px rgba(0,0,0,0.04);"></div>
<svg style="position:absolute;left:377px;top:308px;" width="16" height="9" viewBox="0 0 16 9"><path d="M0 0 L6.8 7.4 Q8 8.6 9.2 7.4 L16 0 Z" fill="#fff"/></svg>
<div style="position:absolute;left:374px;top:290.00px;font-size:13px;line-height:13px;font-weight:400;color:#303030;white-space:nowrap;">Z–A</div>
<div style="position:absolute;left:998.3px;top:848.00px;font-size:13px;line-height:13px;font-weight:400;color:#303030;white-space:nowrap;letter-spacing:-0.08px;">Learn more about <span style="color:#1f64c6;text-decoration:underline;">blog posts</span></div>
</body></html>
